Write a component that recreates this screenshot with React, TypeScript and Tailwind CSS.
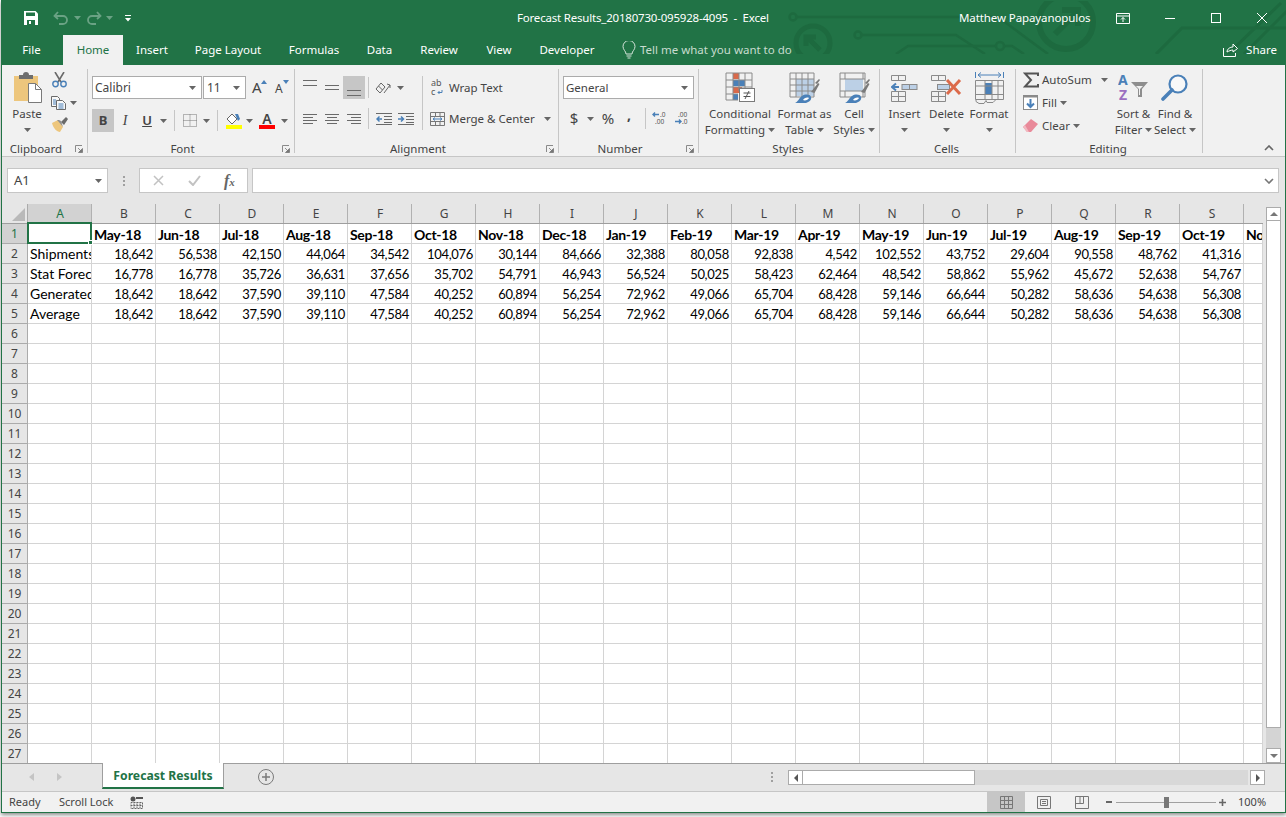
import type { ReactNode } from 'react'

const green = '#217346'
const gray = '#6a6a6a'
const blue = '#4a80b8'

const headers = ['May-18', 'Jun-18', 'Jul-18', 'Aug-18', 'Sep-18', 'Oct-18', 'Nov-18', 'Dec-18', 'Jan-19', 'Feb-19', 'Mar-19', 'Apr-19', 'May-19', 'Jun-19', 'Jul-19', 'Aug-19', 'Sep-19', 'Oct-19', 'Nov-19']
const letters = 'A B C D E F G H I J K L M N O P Q R S'.split(' ')
const generated = ['18,642', '18,642', '37,590', '39,110', '47,584', '40,252', '60,894', '56,254', '72,962', '49,066', '65,704', '68,428', '59,146', '66,644', '50,282', '58,636', '54,638', '56,308']
const data = [
  { name: 'Shipments', values: ['18,642', '56,538', '42,150', '44,064', '34,542', '104,076', '30,144', '84,666', '32,388', '80,058', '92,838', '4,542', '102,552', '43,752', '29,604', '90,558', '48,762', '41,316'] },
  { name: 'Stat Forecast', values: ['16,778', '16,778', '35,726', '36,631', '37,656', '35,702', '54,791', '46,943', '56,524', '50,025', '58,423', '62,464', '48,542', '58,862', '55,962', '45,672', '52,638', '54,767'] },
  { name: 'Generated', values: generated },
  { name: 'Average', values: generated },
]
const rowNumbers = Array.from({ length: 27 }, (_, i) => i + 1)

function Caret({ color = '#666666' }: { color?: string }) {
  return (
    <svg width="7" height="4" viewBox="0 0 7 4" className="shrink-0">
      <path d="M0 0h7L3.5 4z" fill={color} />
    </svg>
  )
}

function Launcher() {
  return (
    <svg width="8" height="8" viewBox="0 0 8 8">
      <path d="M0.5 7V0.5H7" fill="none" stroke="#8a8a8a" />
      <path d="M3 3l3 3M7.5 3.5v4h-4z" fill="#777777" stroke="#777777" strokeWidth="0.8" />
    </svg>
  )
}

function Lines({ rows }: { rows: [number, number, number?][] }) {
  return (
    <svg width="14" height="16" viewBox="0 0 14 16">
      {rows.map(([y, w, x], i) => (
        <rect key={i} x={x ?? 0} y={y} width={w} height="1" fill={gray} />
      ))}
    </svg>
  )
}

function Slot({ w, children, className = '' }: { w: number; children?: ReactNode; className?: string }) {
  return (
    <div style={{ width: w }} className={`flex h-[23px] shrink-0 items-center justify-center ${className}`}>
      {children}
    </div>
  )
}

function Sep({ h = 'h-[21px]' }: { h?: string }) {
  return <div className={`w-px shrink-0 self-center bg-[#c6c6c6] ${h}`} />
}

function Group({ w, label, launcher, children }: { w: number; label: string; launcher?: boolean; children: ReactNode }) {
  return (
    <div style={{ width: w }} className="flex h-[84px] shrink-0 flex-col border-r border-[#c6c6c6]">
      <div className="h-[76px]">{children}</div>
      <div className="flex h-[8px] items-center text-[11.5px] leading-none text-[#444444]">
        <div className={launcher ? 'flex-1 text-center' : 'flex-1 pr-[2px] text-center'}>{label}</div>
        {launcher && (
          <div className="flex w-[17px] justify-end pr-[4px]">
            <Launcher />
          </div>
        )}
      </div>
    </div>
  )
}

function Big({ w, icon, top, bottom }: { w: number; icon: ReactNode; top: string; bottom?: string }) {
  return (
    <div style={{ width: w }} className="flex shrink-0 flex-col items-center text-[11.5px] leading-[16px] text-[#444444]">
      <div className="flex h-[37px] items-center justify-center">{icon}</div>
      <div className="whitespace-nowrap">{top}</div>
      <div className="flex h-[16px] items-center gap-[3px] whitespace-nowrap">
        {bottom && <span>{bottom}</span>}
        <Caret />
      </div>
    </div>
  )
}

function ConditionalIcon() {
  return (
    <svg width="31" height="31" viewBox="0 0 31 31">
      <rect x="8" y="1" width="6" height="6" fill="#d9694a" />
      <rect x="8" y="8" width="12" height="6" fill={blue} />
      <rect x="8" y="15" width="9" height="6" fill="#d9694a" />
      <rect x="8" y="22" width="5" height="6" fill={blue} />
      <path d="M1 1h26v18M1 1v27h12M1 8h26M1 15h26M1 22h12M8 1v27M14 1v18M20 1v18" fill="none" stroke="#8a8a8a" />
      <rect x="14.5" y="16.5" width="15" height="13" fill="#ffffff" stroke="#7a7a7a" />
      <path d="M18.5 21h7M18.5 24.5h7M24 19l-4 8" stroke="#555555" fill="none" />
    </svg>
  )
}

function TableStyleIcon({ cell = false }: { cell?: boolean }) {
  return (
    <svg width="31" height="31" viewBox="0 0 31 31">
      {cell ? (
        <>
          <rect x="6" y="7" width="18" height="12" fill="#bcd0e6" />
          <path d="M1 1h25v24H1zM1 7h25M1 19h25M6 1v6M6 19v6M24 1v6M24 19v6" fill="none" stroke="#8a8a8a" />
        </>
      ) : (
        <>
          <rect x="7" y="7" width="18" height="17" fill="#bcd0e6" />
          <path d="M1 1h24v24H1zM1 7h24M1 13h24M1 19h24M7 1v24M13 1v24M19 1v24" fill="none" stroke="#8a8a8a" />
        </>
      )}
      <path d="M22 20l7-9 1.500 1-5 9z" fill="#7a7a7a" />
      <path d="M26 11l4-4 1 1-3 4z" fill="#7a7a7a" />
      <path d="M6 31c3-1 4-5 7-7 3-2 8-2 9 1 1 3-2 5-5 6z" fill={blue} />
      <path d="M14 28c1-2 4-3 6-2-1 2-4 3-6 2z" fill="#ffffff" />
    </svg>
  )
}

function TwoCells({ y, x = 0 }: { y: number; x?: number }) {
  return <path d={`M${x + 0.5} ${y + 0.5}h14v5h-14zM${x + 7.5} ${y + 0.5}v5`} fill="none" stroke="#8a8a8a" strokeWidth="1" />
}

function InsertIcon() {
  return (
    <svg width="28" height="28" viewBox="0 0 28 28">
      <TwoCells y={1} />
      <rect x="11" y="10.500" width="15" height="5" fill="#bcd0e6" stroke="#8a8a8a" />
      <path d="M18.500 10.500v5" stroke="#8a8a8a" />
      <path d="M1 13h7M5 9.500L1 13l4 3.500" fill="none" stroke={blue} strokeWidth="2" />
      <path d="M0.500 17.500h14v10h-14zM0.500 22.500h14M7.500 17.500v10" fill="none" stroke="#8a8a8a" />
    </svg>
  )
}

function DeleteIcon() {
  return (
    <svg width="31" height="28" viewBox="0 0 31 28">
      <TwoCells y={1} />
      <rect x="6.500" y="10.500" width="12" height="5" fill="#bcd0e6" stroke="#8a8a8a" />
      <path d="M0.500 17.500h14v10h-14zM0.500 22.500h14M7.500 17.500v10" fill="none" stroke="#8a8a8a" />
      <path d="M16 6l13 14M29 6L16 20" stroke="#dc6a4a" strokeWidth="3" fill="none" />
    </svg>
  )
}

function FormatIcon() {
  return (
    <svg width="29" height="34" viewBox="0 0 29 34">
      <path d="M0.500 1v6M28.500 1v6" stroke={blue} />
      <path d="M3 4h23M6 1.500L3 4l3 2.500M23 1.500L26 4l-3 2.500" fill="none" stroke={blue} />
      <rect x="10" y="12" width="7" height="11" fill={blue} />
      <path d="M0.500 9.500h28v19h-28zM0.500 15h28M0.500 23.500h28M10 9.500v19M17 9.500v19M23 9.500v19" fill="none" stroke="#8a8a8a" />
      <path d="M1 28.500v2l3 2h5l2-3 1 2h6l3-3" fill="none" stroke="#8a8a8a" />
    </svg>
  )
}

function SortIcon() {
  return (
    <svg width="31" height="29" viewBox="0 0 31 29">
      <text x="0" y="12" fontFamily="Noto Sans" fontSize="14" fontWeight="700" fill={blue}>A</text>
      <text x="1" y="27" fontFamily="Noto Sans" fontSize="14" fontWeight="700" fill="#9b6fc0">Z</text>
      <path d="M13 9h17l-6 7v8h-4v-8z" fill="#8e8e8e" />
      <path d="M18 13h7l-3 3v6h-1v-6z" fill="#f1f1f1" />
    </svg>
  )
}

function FindIcon() {
  return (
    <svg width="28" height="28" viewBox="0 0 28 28">
      <circle cx="17" cy="10" r="8.500" fill="#f8f8f8" stroke={blue} strokeWidth="2.200" />
      <path d="M11 16L2 25" stroke={blue} strokeWidth="3.600" strokeLinecap="round" />
    </svg>
  )
}

function PasteIcon() {
  return (
    <svg width="29" height="31" viewBox="0 0 29 31">
      <path d="M1 4h24v25H1z" fill="#edc67d" />
      <path d="M6 3h4a3 3 0 0 1 6 0h4v4H6z" fill="#6e6e6e" />
      <path d="M15.500 11.500h7l6 6v13h-13z" fill="#ffffff" stroke="#7a7a7a" />
      <path d="M22.500 11.500v6h6" fill="none" stroke="#7a7a7a" />
    </svg>
  )
}

function CutIcon() {
  return (
    <svg width="15" height="16" viewBox="0 0 15 16">
      <path d="M3 0l6 10M12 0L6 10" stroke="#6a6a6a" strokeWidth="1.600" />
      <circle cx="3.500" cy="12" r="2.700" fill="none" stroke={blue} strokeWidth="1.400" />
      <circle cx="11.500" cy="12" r="2.700" fill="none" stroke={blue} strokeWidth="1.400" />
    </svg>
  )
}

function CopyIcon() {
  return (
    <svg width="15" height="14" viewBox="0 0 15 14">
      <path d="M0.500 0.500h6l2 2v8h-8z" fill="#f8f8f8" stroke="#6a6a6a" />
      <path d="M5.500 4.500h6l3 3v6h-9z" fill="#f8f8f8" stroke="#6a6a6a" />
      <path d="M2 4h3M2 6h3M2 8h3M7.500 8h5M7.500 10h5M7.500 12h5" stroke={blue} />
    </svg>
  )
}

function BrushIcon() {
  return (
    <svg width="17" height="15" viewBox="0 0 17 15">
      <path d="M1 6l6-3 5 7-3 5c-3 0-7-4-8-9z" fill="#edc67d" />
      <path d="M6 3l2 0 2 1 1 3 1 3-5-6z" fill="#8e8e8e" />
      <path d="M10 5l5-5 2 2-4 6z" fill="#6a6a6a" />
    </svg>
  )
}

function Circuit() {
  return (
    <svg className="pointer-events-none absolute top-0 left-0" width="1285" height="53" viewBox="0 0 1285 53">
      <g fill="none" stroke="#1d6a3f" strokeWidth="2.500">
        <circle cx="791" cy="16" r="3.500" />
        <path d="M795 16h201l50 37" />
        <circle cx="856" cy="34" r="3.500" />
        <path d="M860 34h94l29 19" />
        <path d="M894 53l12-8h88M1002 45h8l12 8" />
        <circle cx="998" cy="45" r="4" />
        <circle cx="811" cy="42" r="17" strokeWidth="5" />
        <path d="M818 49l-13-13M804 45v-9h10" strokeWidth="5" />
        <circle cx="1064" cy="21" r="27" strokeWidth="6" />
        <path d="M1053 33l21-21M1060 9h16v16" strokeWidth="6" />
        <path d="M1154 53l26-26h105M1226 53l53-51M1242 53l43-43" strokeWidth="3" />
      </g>
    </svg>
  )
}

function TitleBar() {
  return (
    <div className="flex h-[34px] items-center text-[11.5px] text-white">
      <div className="flex w-[515px] items-center pl-[22px]">
        <svg width="14" height="14" viewBox="0 0 14 14">
          <path d="M0 0h11.500L14 2.500V14H0z" fill="#ffffff" />
          <rect x="2" y="1.500" width="9" height="3.500" fill={green} />
          <rect x="3" y="9" width="8" height="5" fill={green} />
          <rect x="5" y="10" width="2" height="3" fill="#ffffff" />
        </svg>
        <svg width="15" height="14" viewBox="0 0 15 14" className="ml-[15px]">
          <path d="M5 1L1.500 5 5 8M2 5h8a4 4 0 0 1 0 8H6" fill="none" stroke="#6aa284" strokeWidth="1.800" />
        </svg>
        <div className="ml-[6px]"><Caret color="#6aa284" /></div>
        <svg width="15" height="14" viewBox="0 0 15 14" className="ml-[6px]">
          <path d="M10 1l3.500 4L10 8M13 5H5a4 4 0 0 0 0 8h4" fill="none" stroke="#6aa284" strokeWidth="1.800" />
        </svg>
        <div className="ml-[4px]"><Caret color="#6aa284" /></div>
        <svg width="6" height="7" viewBox="0 0 6 7" className="ml-[12px]">
          <path d="M0 0h6v1H0zM0 3h6L3 6.500z" fill="#ffffff" />
        </svg>
      </div>
      <div className="w-[442px] tracking-[-0.2px] whitespace-nowrap">Forecast Results_20180730-095928-4095&nbsp; -&nbsp; Excel</div>
      <div className="w-[157px] tracking-[-0.1px] whitespace-nowrap">Matthew Papayanopulos</div>
      <svg width="14" height="11" viewBox="0 0 14 11">
        <path d="M0.500 0.500h13v10h-13zM0.500 3h13M7 9V4.500M5 6.500l2-2 2 2" fill="none" stroke="#ffffff" />
      </svg>
      <svg width="10" height="1" viewBox="0 0 10 1" className="ml-[35px]">
        <rect width="10" height="1" fill="#ffffff" />
      </svg>
      <svg width="10" height="10" viewBox="0 0 10 10" className="ml-[36px]">
        <rect x="0.500" y="0.500" width="9" height="9" fill="none" stroke="#ffffff" />
      </svg>
      <svg width="10" height="10" viewBox="0 0 10 10" className="ml-[36px]">
        <path d="M0 0l10 10M10 0L0 10" stroke="#ffffff" />
      </svg>
    </div>
  )
}

function TabRow() {
  const tabs = [
    { label: 'Insert', w: 58 },
    { label: 'Page Layout', w: 94 },
    { label: 'Formulas', w: 78 },
    { label: 'Data', w: 53 },
    { label: 'Review', w: 66 },
    { label: 'View', w: 54 },
    { label: 'Developer', w: 82 },
  ]
  return (
    <div className="flex h-[30px] items-center text-[11.5px] text-white">
      <div className="flex h-full w-[59px] items-center justify-center pb-[1px]">File</div>
      <div className="ml-[2px] flex h-full w-[60px] items-center justify-center bg-[#f1f1f1] pb-[1px] text-[#217346]">Home</div>
      {tabs.map((t) => (
        <div key={t.label} style={{ width: t.w }} className="flex h-full items-center justify-center whitespace-nowrap pb-[1px]">
          {t.label}
        </div>
      ))}
      <svg width="14" height="18" viewBox="0 0 14 18" className="ml-[14px]">
        <path d="M4 13c0-3-3-4-3-7.500a6 6 0 0 1 12 0C13 9 10 10 10 13zM4.500 15h5M5.500 17h3" fill="none" stroke="#d5e4da" />
      </svg>
      <div className="ml-[4px] whitespace-nowrap text-[#c8dccf]">Tell me what you want to do</div>
      <svg width="15" height="14" viewBox="0 0 15 14" className="ml-auto">
        <path d="M0.500 5v8.500h12V10M4 9c0-3 3-5 6-5V1l4.500 4.500L10 9V7C8 7 6 8 4 9z" fill="none" stroke="#ffffff" />
      </svg>
      <div className="mr-[8px] ml-[8px]">Share</div>
    </div>
  )
}

function Clipboard() {
  return (
    <Group w={86} label="Clipboard" launcher>
      <div className="flex pl-[8px]">
        <Big w={34} icon={<PasteIcon />} top="Paste" />
        <div className="ml-[6px] flex flex-col">
          <div className="flex h-[22px] items-center pl-[2px]"><CutIcon /></div>
          <div className="flex h-[24px] items-center gap-[4px] pl-[1px]"><CopyIcon /><Caret /></div>
          <div className="flex h-[18px] items-center pl-[1px]"><BrushIcon /></div>
        </div>
      </div>
    </Group>
  )
}

function Font() {
  return (
    <Group w={207} label="Font" launcher>
      <div className="flex flex-col pt-[7px] pl-[4px] text-[#444444]">
        <div className="flex">
          <div className="flex h-[23px] w-[110px] items-center justify-between border border-[#ababab] bg-white px-[2px] pr-[5px] text-[12px]">
            Calibri <Caret />
          </div>
          <div className="ml-[1px] flex h-[23px] w-[43px] items-center justify-between border border-[#ababab] bg-white px-[3px] pr-[5px] text-[12px]">
            11 <Caret />
          </div>
          <div className="ml-[6px] flex w-[18px] items-start text-[15px] leading-[23px]">
            A
            <svg width="6" height="4" viewBox="0 0 6 4" className="mt-[4px] -ml-px"><path d="M0 4l3-4 3 4z" fill={blue} /></svg>
          </div>
          <div className="ml-[5px] flex w-[18px] items-start text-[12px] leading-[25px]">
            A
            <svg width="6" height="4" viewBox="0 0 6 4" className="mt-[4px]"><path d="M0 0l3 4 3-4z" fill={blue} /></svg>
          </div>
        </div>
        <div className="mt-[8px] flex items-center">
          <Slot w={22} className="bg-[#c6c6c6] text-[13px] font-bold">B</Slot>
          <Slot w={22} className="text-[14px] italic"><span style={{ fontFamily: 'Liberation Serif' }}>I</span></Slot>
          <Slot w={22} className="text-[13px] font-semibold underline">U</Slot>
          <Slot w={11}><Caret /></Slot>
          <div className="w-[5px]" />
          <Sep />
          <Slot w={27} className="pl-[2px]">
            <svg width="14" height="13" viewBox="0 0 14 13">
              <path d="M0.500 0.500h13v12h-13zM0.500 6.500h13M7 0.500v12" fill="none" stroke="#777777" strokeDasharray="1 1" />
            </svg>
          </Slot>
          <Slot w={9}><Caret /></Slot>
          <div className="w-[6px]" />
          <Sep />
          <Slot w={23} className="ml-[4px]">
            <svg width="16" height="16" viewBox="0 0 16 16">
              <path d="M6 1L1 6l5 5 5-5z" fill="#ffffff" stroke="#666666" />
              <path d="M9 1h3l2 5-2 2z" fill={blue} />
              <rect y="12" width="16" height="4" fill="#ffff00" />
            </svg>
          </Slot>
          <Slot w={8}><Caret /></Slot>
          <Slot w={28}>
            <div className="flex flex-col items-center">
              <span className="text-[14px] leading-[13px] font-semibold">A</span>
              <span className="h-[4px] w-[16px] bg-[#ff0000]" />
            </div>
          </Slot>
          <Slot w={6}><Caret /></Slot>
        </div>
      </div>
    </Group>
  )
}

function Alignment() {
  return (
    <Group w={264} label="Alignment" launcher>
      <div className="flex h-full pt-[7px] text-[11.5px] text-[#444444]">
        <div className="flex w-[127px] flex-col pl-[4px]">
          <div className="flex items-center">
            <Slot w={22}><Lines rows={[[0, 14], [5, 14]]} /></Slot>
            <Slot w={22}><Lines rows={[[5, 14], [9, 14]]} /></Slot>
            <Slot w={22} className="bg-[#c6c6c6]"><Lines rows={[[10, 14], [15, 14]]} /></Slot>
            <div className="w-[3px]" />
            <Sep />
            <Slot w={28}>
              <svg width="16" height="14" viewBox="0 0 16 14">
                <path d="M1 8l5-6 4 4-5 6zM3.500 5l4 4M9 12l6-8M12 3l3 1v3" fill="none" stroke="#666666" />
              </svg>
            </Slot>
            <Caret />
          </div>
          <div className="mt-[8px] flex items-center">
            <Slot w={22}><Lines rows={[[3, 14], [6, 10], [9, 14], [12, 10]]} /></Slot>
            <Slot w={22}><Lines rows={[[3, 14], [6, 10, 2], [9, 14], [12, 10, 2]]} /></Slot>
            <Slot w={22}><Lines rows={[[3, 14], [6, 10, 4], [9, 14], [12, 10, 4]]} /></Slot>
            <div className="w-[3px]" />
            <Sep />
            <Slot w={22} className="ml-[4px]">
              <svg width="16" height="12" viewBox="0 0 16 12">
                <path d="M0 0.500h16M8 3.500h8M8 6.500h8M8 9.500h8M0 11.500h16" stroke="#6a6a6a" />
                <path d="M6 6H1M3.500 3.500L1 6l2.500 2.500" fill="none" stroke={blue} strokeWidth="1.500" />
              </svg>
            </Slot>
            <Slot w={22}>
              <svg width="16" height="12" viewBox="0 0 16 12">
                <path d="M0 0.500h16M8 3.500h8M8 6.500h8M8 9.500h8M0 11.500h16" stroke="#6a6a6a" />
                <path d="M0 6h5M3 3.500L5.500 6 3 8.500" fill="none" stroke={blue} strokeWidth="1.500" />
              </svg>
            </Slot>
          </div>
        </div>
        <Sep h="h-[54px] self-start" />
        <div className="flex flex-col pl-[7px]">
          <div className="flex h-[23px] items-center">
            <svg width="15" height="19" viewBox="0 0 15 19">
              <text x="1" y="8" fontFamily="Noto Sans" fontSize="9" fill="#555555">ab</text>
              <text x="1" y="17" fontFamily="Noto Sans" fontSize="9" fill="#555555">c</text>
              <path d="M12 12v2.500H8M9.500 13L8 14.500 9.500 16" fill="none" stroke={blue} />
            </svg>
            <span className="ml-[4px] whitespace-nowrap">Wrap Text</span>
          </div>
          <div className="mt-[8px] flex h-[23px] items-center">
            <svg width="15" height="14" viewBox="0 0 15 14">
              <path d="M0.500 0.500h14v13H0.500zM0.500 4.500h14M0.500 9.500h14M5.500 0.500v4M10 0.500v4M5.500 9.500v4M10 9.500v4" fill="none" stroke="#777777" />
              <path d="M3 7h9M5 5.500L3 7l2 1.500M10 5.500L12 7l-2 1.500" fill="none" stroke={blue} />
            </svg>
            <span className="ml-[4px] whitespace-nowrap">Merge &amp; Center</span>
            <div className="ml-[9px]"><Caret /></div>
          </div>
        </div>
      </div>
    </Group>
  )
}

function NumberGroup() {
  return (
    <Group w={140} label="Number" launcher>
      <div className="flex flex-col pt-[7px] pl-[4px] text-[#444444]">
        <div className="flex h-[23px] w-[131px] items-center justify-between border border-[#ababab] bg-white px-[2px] pr-[5px] text-[11.5px]">
          General <Caret />
        </div>
        <div className="mt-[8px] flex items-center">
          <Slot w={22} className="text-[15px]">$</Slot>
          <Slot w={10}><Caret /></Slot>
          <Slot w={26} className="text-[15px]">%</Slot>
          <Slot w={16} className="pb-[8px] text-[14px] font-bold">,</Slot>
          <div className="w-[8px]" />
          <Sep />
          <Slot w={28}>
            <svg width="16" height="15" viewBox="0 0 16 15">
              <path d="M7 3.500H1M3 1.500l-2 2 2 2" fill="none" stroke={blue} strokeWidth="1.400" />
              <text x="8" y="6" fontFamily="Noto Sans" fontSize="6.500" fill="#555555">.0</text>
              <text x="3" y="13" fontFamily="Noto Sans" fontSize="6.500" fill="#555555">.00</text>
            </svg>
          </Slot>
          <Slot w={16}>
            <svg width="16" height="15" viewBox="0 0 16 15">
              <text x="4" y="6" fontFamily="Noto Sans" fontSize="6.500" fill="#555555">.00</text>
              <path d="M1 10.500h6M5 8.500l2 2-2 2" fill="none" stroke={blue} strokeWidth="1.400" />
              <text x="8" y="13" fontFamily="Noto Sans" fontSize="6.500" fill="#555555">.0</text>
            </svg>
          </Slot>
        </div>
      </div>
    </Group>
  )
}

function Styles() {
  return (
    <Group w={181} label="Styles">
      <div className="flex pl-[6px]">
        <Big w={70} icon={<ConditionalIcon />} top="Conditional" bottom="Formatting" />
        <Big w={59} icon={<TableStyleIcon />} top="Format as" bottom="Table" />
        <Big w={40} icon={<TableStyleIcon cell />} top="Cell" bottom="Styles" />
      </div>
    </Group>
  )
}

function Cells() {
  return (
    <Group w={136} label="Cells">
      <div className="flex pl-[4px]">
        <Big w={41} icon={<InsertIcon />} top="Insert" />
        <Big w={43} icon={<DeleteIcon />} top="Delete" />
        <Big w={42} icon={<FormatIcon />} top="Format" />
      </div>
    </Group>
  )
}

function Editing() {
  return (
    <Group w={187} label="Editing">
      <div className="flex pl-[7px]">
        <div className="flex w-[91px] flex-col text-[11.5px] text-[#444444]">
          <div className="flex h-[22px] items-center">
            <svg width="19" height="16" viewBox="0 0 19 16">
              <path d="M15 4V1.500H2L8 8l-6 6.500h13V12" fill="none" stroke="#555555" strokeWidth="2" />
            </svg>
            <span>AutoSum</span>
            <div className="ml-[9px]"><Caret /></div>
          </div>
          <div className="flex h-[23px] items-center">
            <div className="w-[19px]">
              <svg width="15" height="15" viewBox="0 0 15 15">
                <rect x="0.500" y="0.500" width="14" height="14" fill="#ffffff" stroke="#8a8a8a" />
                <rect x="0.500" y="0.500" width="14" height="2" fill="#8a8a8a" />
                <path d="M7.500 4v8M4 8.500l3.500 3.500L11 8.500" fill="none" stroke={blue} strokeWidth="2" />
              </svg>
            </div>
            <span>Fill</span>
            <div className="ml-[3px]"><Caret /></div>
          </div>
          <div className="flex h-[23px] items-center">
            <div className="w-[19px]">
              <svg width="15" height="13" viewBox="0 0 15 13">
                <path d="M0 8l8-8 7 5-7 8H4z" fill="#e98a9a" />
                <path d="M0 8l4 5h2L2 6z" fill="#f2b8c0" />
              </svg>
            </div>
            <span>Clear</span>
            <div className="ml-[3px]"><Caret /></div>
          </div>
        </div>
        <Big w={39} icon={<SortIcon />} top="Sort &" bottom="Filter" />
        <Big w={44} icon={<FindIcon />} top="Find &" bottom="Select" />
      </div>
    </Group>
  )
}

function Ribbon() {
  return (
    <div className="flex h-[92px] border-b border-[#c6c6c6] bg-[#f1f1f1] pt-[4px]">
      <Clipboard />
      <Font />
      <Alignment />
      <NumberGroup />
      <Styles />
      <Cells />
      <Editing />
      <div className="flex h-[84px] flex-1 items-end justify-end pr-[11px] pb-[2px]">
        <svg width="10" height="6" viewBox="0 0 10 6">
          <path d="M1 5l4-4 4 4" fill="none" stroke="#666666" strokeWidth="1.600" />
        </svg>
      </div>
    </div>
  )
}

function FormulaBar() {
  return (
    <div className="flex h-[47px] bg-[#e6e6e6] pt-[11px] pl-[5px] text-[13px] text-[#444444]">
      <div className="flex h-[25px] w-[101px] items-center justify-between border border-[#c6c6c6] bg-white pr-[5px] pl-[6px]">
        A1 <Caret />
      </div>
      <div className="flex h-[25px] w-[31px] flex-col items-center justify-center gap-[2px]">
        <span className="h-[2px] w-[2px] bg-[#a0a0a0]" />
        <span className="h-[2px] w-[2px] bg-[#a0a0a0]" />
        <span className="h-[2px] w-[2px] bg-[#a0a0a0]" />
      </div>
      <div className="flex h-[25px] w-[109px] items-center border border-[#c6c6c6] bg-white">
        <svg width="11" height="11" viewBox="0 0 11 11" className="ml-[13px]">
          <path d="M1 1l9 9M10 1l-9 9" stroke="#c2c2c2" strokeWidth="1.500" />
        </svg>
        <svg width="13" height="11" viewBox="0 0 13 11" className="ml-[24px]">
          <path d="M1 6l4 4 7-9" fill="none" stroke="#c2c2c2" strokeWidth="2" />
        </svg>
        <span className="ml-[23px] text-[16px] font-bold text-[#666666] italic" style={{ fontFamily: 'Liberation Serif' }}>
          f<span className="text-[11px]">x</span>
        </span>
      </div>
      <div className="mr-[6px] ml-[4px] flex h-[25px] flex-1 items-center justify-end border border-[#c6c6c6] bg-white pr-[4px]">
        <svg width="10" height="6" viewBox="0 0 10 6">
          <path d="M1 1l4 4 4-4" fill="none" stroke="#777777" strokeWidth="1.600" />
        </svg>
      </div>
    </div>
  )
}

function Cell({ w = 'w-16', align, bold, children }: { w?: string; align?: 'right'; bold?: boolean; children?: ReactNode }) {
  return (
    <div
      className={`h-full shrink-0 overflow-hidden border-r border-b border-[#d4d4d4] bg-white px-[2px] whitespace-nowrap ${w} ${
        align === 'right' ? 'text-right text-[13px] leading-[21px] tracking-[-0.3px]' : 'text-left'
      } ${bold ? 'leading-[21px] font-bold tracking-[-0.3px]' : 'leading-[19px]'}`}
    >
      {children}
    </div>
  )
}

function Sheet() {
  return (
    <div className="w-[1261px] shrink-0 text-[14px] text-black" style={{ fontFamily: 'Lato, sans-serif' }}>
      <div className="flex h-[20px] border-b border-[#9e9e9e] bg-[#e6e6e6] text-[#444444]" style={{ fontFamily: '"Noto Sans", sans-serif', fontSize: 12 }}>
        <div className="flex w-[26px] shrink-0 items-end justify-end border-r border-[#ababab] pr-[2px] pb-[2px]">
          <svg width="13" height="13" viewBox="0 0 13 13"><path d="M13 0v13H0z" fill="#b9b9b9" /></svg>
        </div>
        {letters.map((l, i) => (
          <div key={l} className={`flex w-16 shrink-0 items-center justify-center border-r border-[#b1b1b1] pt-[1px] pl-[1px] ${i === 0 ? 'bg-[#d2d2d2] text-[#217346]' : ''}`}>
            {l}
          </div>
        ))}
      </div>
      {rowNumbers.map((n) => {
        const row = n >= 2 && n <= 5 ? data[n - 2] : null
        return (
          <div key={n} className="flex h-[20px]">
            <div
              className={`flex w-[26px] shrink-0 items-center justify-center border-r border-b border-[#ababab] pt-[1px] text-[12px] ${n === 1 ? 'bg-[#d2d2d2] text-[#217346]' : 'bg-[#e6e6e6] text-[#444444]'}`}
              style={{ fontFamily: '"Noto Sans", sans-serif' }}
            >
              {n}
            </div>
            {n === 1 && (
              <>
                <div className="relative z-10 h-full w-16 shrink-0 border-r border-b border-[#d4d4d4] bg-white">
                  <div className="absolute top-[-2px] right-[-1px] bottom-[-1px] left-[-1px] border-2 border-[#217346]" />
                  <div className="absolute right-[-2px] bottom-[-2px] h-[5px] w-[5px] border border-white bg-[#217346]" />
                </div>
                {headers.slice(0, 18).map((h) => (
                  <Cell key={h} bold>{h}</Cell>
                ))}
                <Cell w="w-[19px]" bold>{headers[18]}</Cell>
              </>
            )}
            {row && (
              <>
                <Cell>{row.name}</Cell>
                {row.values.map((v, i) => (
                  <Cell key={i} align="right">{v}</Cell>
                ))}
                <Cell w="w-[19px]" />
              </>
            )}
            {n > 5 && (
              <>
                {letters.map((l) => (
                  <Cell key={l} />
                ))}
                <Cell w="w-[19px]" />
              </>
            )}
          </div>
        )
      })}
    </div>
  )
}

function VerticalScroll() {
  return (
    <div className="ml-[3px] flex w-[15px] flex-col">
      <div className="mt-[3px] flex h-[14px] items-center justify-center border border-[#ababab] bg-white">
        <svg width="8" height="4" viewBox="0 0 8 4"><path d="M0 4l4-4 4 4z" fill="#777777" /></svg>
      </div>
      <div className="h-[507px] border-x border-b border-[#ababab] bg-white" />
      <div className="flex-1 bg-[#d4d4d4]" />
      <div className="mb-px flex h-[15px] items-center justify-center border border-[#ababab] bg-white">
        <svg width="8" height="4" viewBox="0 0 8 4"><path d="M0 0h8L4 4z" fill="#777777" /></svg>
      </div>
    </div>
  )
}

function SheetTabs() {
  return (
    <div className="relative -mt-px flex h-[29px] border-t border-b border-t-[#9e9e9e] border-b-[#c6c6c6] bg-[#e6e6e6]">
      <div className="flex w-[100px] items-center pb-[2px] pl-[27px]">
        <svg width="5" height="8" viewBox="0 0 5 8"><path d="M5 0v8L0 4z" fill="#c4c4c4" /></svg>
        <svg width="5" height="8" viewBox="0 0 5 8" className="ml-[23px]"><path d="M0 0v8l5-4z" fill="#c4c4c4" /></svg>
      </div>
      <div
        className="relative -mt-px flex h-[26px] w-[122px] items-center justify-center border-x border-b-2 border-x-[#9e9e9e] border-b-[#217346] bg-white pt-[2px] text-[12.2px] font-bold text-[#217346]"
        style={{ fontFamily: '"Noto Sans", sans-serif' }}
      >
        Forecast Results
      </div>
      <div className="ml-[34px] flex items-center pb-[2px]">
        <svg width="16" height="16" viewBox="0 0 16 16">
          <circle cx="8" cy="8" r="7.500" fill="none" stroke="#7a7a7a" />
          <path d="M4 8h8M8 4v8" stroke="#7a7a7a" strokeWidth="1.500" />
        </svg>
      </div>
      <div className="ml-[497px] flex flex-col justify-center gap-[2px] pb-[2px]">
        <span className="h-[2px] w-[2px] bg-[#a0a0a0]" />
        <span className="h-[2px] w-[2px] bg-[#a0a0a0]" />
        <span className="h-[2px] w-[2px] bg-[#a0a0a0]" />
      </div>
      <div className="ml-[15px] flex pt-[6px]">
        <div className="flex h-[15px] w-[15px] items-center justify-center border border-[#ababab] bg-white">
          <svg width="4" height="8" viewBox="0 0 4 8"><path d="M4 0v8L0 4z" fill="#555555" /></svg>
        </div>
        <div className="h-[15px] w-[172px] border-y border-r border-[#ababab] bg-white" />
        <div className="h-[15px] w-[273px] bg-[#d8d8d8]" />
        <div className="ml-[2px] flex h-[15px] w-[15px] items-center justify-center border border-[#ababab] bg-white">
          <svg width="4" height="8" viewBox="0 0 4 8"><path d="M0 0v8l4-4z" fill="#555555" /></svg>
        </div>
      </div>
    </div>
  )
}

function StatusBar() {
  return (
    <div className="flex h-[20px] items-center bg-[#f1f1f1] text-[11px] text-[#444444]">
      <div className="w-[57px] pl-[7px]">Ready</div>
      <div className="w-[71px] whitespace-nowrap">Scroll Lock</div>
      <svg width="13" height="13" viewBox="0 0 13 13">
        <circle cx="3" cy="3" r="2.500" fill="#555555" />
        <path d="M6 1h7v2H6z" fill="#555555" />
        <path d="M1 6.500h11.500v6H1zM1 9.500h11.500M4 6.500v6M7 6.500v6M10 6.500v6" fill="none" stroke="#666666" strokeDasharray="1 0.500" />
      </svg>
      <div className="ml-auto flex h-full w-[298px] items-center">
        <div className="flex h-full w-[38px] items-center justify-center bg-[#c6c6c6]">
          <svg width="13" height="13" viewBox="0 0 13 13">
            <path d="M0.500 0.500h12v12h-12zM4.500 0.500v12M8.500 0.500v12M0.500 4.500h12M0.500 8.500h12" fill="none" stroke="#777777" />
          </svg>
        </div>
        <div className="flex h-full w-[38px] items-center justify-center">
          <svg width="14" height="13" viewBox="0 0 14 13">
            <path d="M0.500 0.500h13v12h-13zM3.500 3.500h7v6h-7zM5 5.500h4M5 7.500h4" fill="none" stroke="#777777" />
          </svg>
        </div>
        <div className="flex h-full w-[38px] items-center justify-center">
          <svg width="14" height="13" viewBox="0 0 14 13">
            <path d="M0.500 0.500h13v12h-13zM0.500 7.500h8v-7M5 0.500v7" fill="none" stroke="#777777" />
          </svg>
        </div>
        <div className="ml-[5px] h-[2px] w-[6px] bg-[#666666]" />
        <div className="relative ml-[4px] h-px w-[100px] bg-[#a0a0a0]">
          <div className="absolute top-[-5px] left-[48px] h-[11px] w-[5px] bg-[#777777]" />
        </div>
        <svg width="7" height="7" viewBox="0 0 7 7" className="ml-[3px]">
          <path d="M0 3.500h7M3.500 0v7" stroke="#666666" strokeWidth="1.600" />
        </svg>
        <span className="ml-[12px]">100%</span>
      </div>
    </div>
  )
}

export default function App() {
  return (
    <div className="h-screen w-screen overflow-hidden bg-white" style={{ fontFamily: '"Noto Sans", sans-serif' }}>
      <div className="ml-px flex h-[813px] w-[1285px] flex-col border border-[#217346] bg-[#e6e6e6] shadow-[0_2px_4px_rgba(0,0,0,0.45)]">
        <div className="relative bg-[#217346]">
          <Circuit />
          <div className="relative">
            <TitleBar />
            <TabRow />
          </div>
        </div>
        <Ribbon />
        <FormulaBar />
        <div className="flex">
          <Sheet />
          <VerticalScroll />
        </div>
        <SheetTabs />
        <StatusBar />
      </div>
    </div>
  )
}
